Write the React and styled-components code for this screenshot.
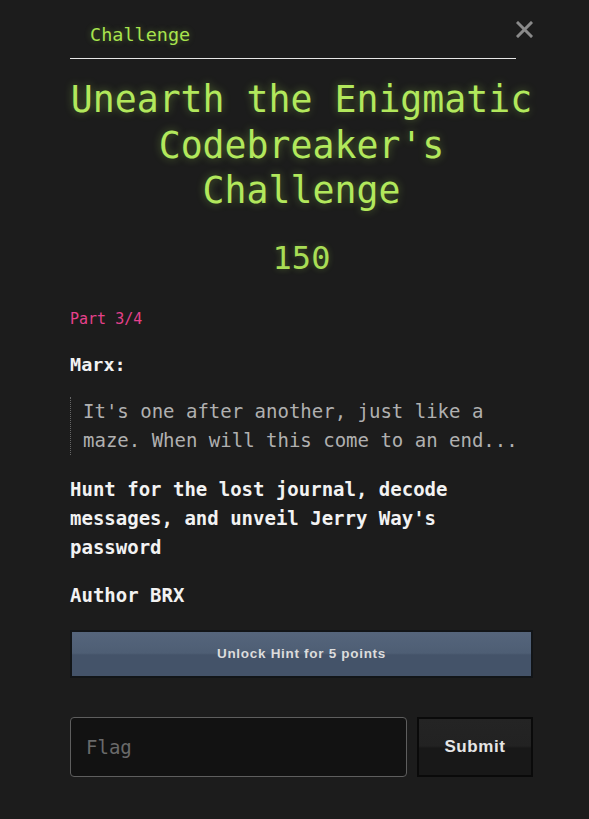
import React from "react";
import styled, { createGlobalStyle } from "styled-components";

const Global = createGlobalStyle`
  html, body {
    margin: 0;
    background: #1c1c1c;
  }
  body {
    font-family: "DejaVu Sans Mono", "Liberation Mono", monospace;
  }
`;

const Modal = styled.div`
  width: 589px;
  min-height: 819px;
  box-sizing: border-box;
  padding: 16px 56px 40px 70px;
  background: #1c1c1c;
`;

const Header = styled.div`
  display: flex;
  align-items: flex-start;
`;

const Tabs = styled.div`
  flex: 1;
  border-bottom: 1px solid #e6e6e6;
  padding: 8px 20px 13px;
`;

const Tab = styled.span`
  font-size: 18.5px;
  color: #a8e44e;
  text-shadow: 0 0 6px rgba(168, 228, 78, 0.35);
`;

const Close = styled.button`
  width: 17px;
  height: 26px;
  padding: 0;
  border: none;
  background: none;
  display: flex;
  align-items: center;
  justify-content: center;
  cursor: pointer;
`;

const Title = styled.h1`
  margin: 18px -10px 0;
  text-align: center;
  font-size: 36.5px;
  font-weight: normal;
  line-height: 45.5px;
  color: #b2e85c;
  text-shadow: 0 0 8px rgba(170, 230, 80, 0.4);
`;

const Points = styled.div`
  margin-top: 25px;
  text-align: center;
  font-size: 32px;
  color: #a8dd55;
  text-shadow: 0 0 6px rgba(170, 230, 80, 0.3);
`;

const Part = styled.div`
  margin-top: 33px;
  font-size: 15px;
  color: #e5418c;
`;

const Speaker = styled.div`
  margin-top: 26px;
  font-size: 18.5px;
  font-weight: bold;
  color: #f2f2f2;
`;

const Quote = styled.blockquote`
  margin: 22px 0 0;
  padding: 0 0 0 12px;
  border-left: 1px dotted #666;
  font-size: 19px;
  line-height: 29px;
  color: #b0b0b0;
`;

const Text = styled.p`
  margin: ${(p) => p.$top}px 0 0;
  font-size: 19px;
  line-height: 29px;
  font-weight: bold;
  color: #f2f2f2;
`;

const HintButton = styled.button`
  display: block;
  width: 100%;
  height: 48px;
  margin-top: 20px;
  border: 2px solid #121518;
  background: linear-gradient(#55657c 0%, #4e5e74 48%, #445369 52%, #445369 100%);
  color: #dcdcdc;
  font-family: "Liberation Sans", Arial, sans-serif;
  font-size: 13.5px;
  font-weight: bold;
  letter-spacing: 0.7px;
  cursor: pointer;
`;

const FlagRow = styled.div`
  display: flex;
  gap: 10px;
  margin-top: 39px;
`;

const FlagInput = styled.input`
  flex: 1;
  min-width: 0;
  height: 60px;
  box-sizing: border-box;
  padding: 0 15px;
  border: 1px solid #5e5e5e;
  border-radius: 4px;
  background: #121212;
  color: #eee;
  font-family: "DejaVu Sans Mono", "Liberation Mono", monospace;
  font-size: 19px;
  outline: none;
  &::placeholder {
    color: #6a6a6a;
  }
`;

const SubmitButton = styled.button`
  width: 116px;
  height: 60px;
  border: 2px solid #0a0a0a;
  background: linear-gradient(#242424 0%, #222 48%, #181818 52%, #181818 100%);
  color: #e6e6e6;
  font-family: "Liberation Sans", Arial, sans-serif;
  font-size: 17px;
  font-weight: bold;
  letter-spacing: 0.6px;
  cursor: pointer;
`;

const App = () => {
  return (
    <>
      <Global />
      <Modal>
        <Header>
          <Tabs>
            <Tab>Challenge</Tab>
          </Tabs>
          <Close aria-label="close">
            <svg width="17" height="17" viewBox="0 0 17 17">
              <path d="M2 2 L15 15 M15 2 L2 15" stroke="#8a8a8a" strokeWidth="3" strokeLinecap="square" />
            </svg>
          </Close>
        </Header>
        <Title>Unearth the Enigmatic Codebreaker's Challenge</Title>
        <Points>150</Points>
        <Part>Part 3/4</Part>
        <Speaker>Marx:</Speaker>
        <Quote>It's one after another, just like a maze. When will this come to an end...</Quote>
        <Text $top={20}>Hunt for the lost journal, decode messages, and unveil Jerry Way's password</Text>
        <Text $top={19}>Author BRX</Text>
        <HintButton>Unlock Hint for 5 points</HintButton>
        <FlagRow>
          <FlagInput placeholder="Flag" />
          <SubmitButton>Submit</SubmitButton>
        </FlagRow>
      </Modal>
    </>
  );
};

export default App;
